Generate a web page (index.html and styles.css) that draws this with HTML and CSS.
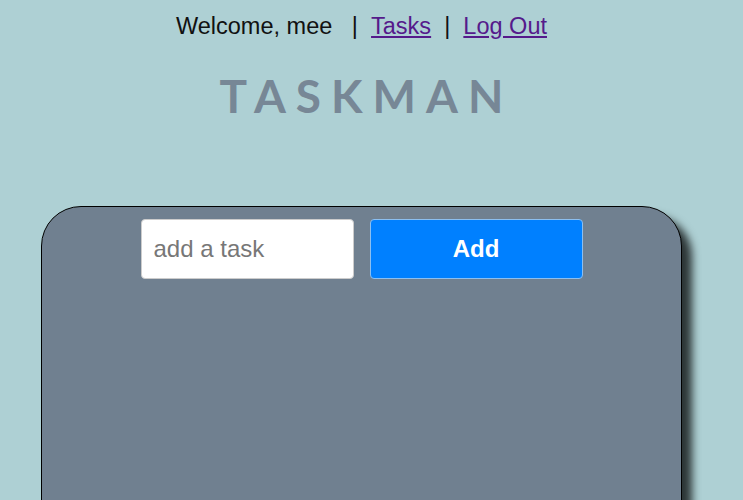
FILE: index.html
```html
<!DOCTYPE html>
<html lang="en">
<head>
    <meta charset="UTF-8">
    <meta name="viewport" content="width=device-width, initial-scale=1.0">
    <title>Taskman</title>
    <link rel="stylesheet" href="styles.css">
</head>
<body>

<div class="page">
    <div class="nav">
        Welcome, mee &nbsp; | &nbsp;<a href="#">Tasks</a> &nbsp;| &nbsp;<a href="#">Log Out</a>
    </div>
    <h1 class="title">TASKMAN</h1>

    <div class="board">
        <form class="add-form" onsubmit="return false;">
            <input type="text" placeholder="add a task" />
            <button type="submit">Add</button>
        </form>
    </div>
</div>

</body>
</html>
```

FILE: styles.css
```css
body {
    margin: 0;
    background-color: #aed0d4;
    font-family: "Liberation Sans", Arial, sans-serif;
    overflow: hidden;
}
.page {
    width: 723px;
}
.nav {
    text-align: center;
    font-size: 23.5px;
    color: #111;
    padding-top: 12px;
    line-height: 28px;
}
.nav a {
    color: #551a8b;
}
.title {
    margin: 32px 0 0 0;
    padding-left: 10px;
    text-align: center;
    font-family: Lato, "Liberation Sans", sans-serif;
    font-weight: 700;
    font-size: 46px;
    line-height: 48px;
    letter-spacing: 10px;
    color: #778796;
}
.board {
    margin: 86px 0 0 41px;
    width: 639px;
    height: 400px;
    background-color: #708090;
    border: 1px solid #000;
    border-radius: 40px;
    box-shadow: 10px 10px 8px rgba(0, 0, 0, 0.75);
}
.add-form {
    display: flex;
    justify-content: center;
    gap: 16px;
    padding-top: 12px;
}
.add-form input {
    width: 213px;
    height: 60px;
    box-sizing: border-box;
    border: 1px solid #ccc;
    border-radius: 4px;
    padding: 0 12px;
    font-size: 24px;
    font-family: "Liberation Sans", Arial, sans-serif;
}
.add-form input::placeholder {
    color: #777;
}
.add-form button {
    width: 213px;
    height: 60px;
    background-color: #0080ff;
    color: #fff;
    border: 1px solid #8cbff0;
    border-radius: 4px;
    font-size: 24px;
    font-weight: 700;
    font-family: "Liberation Sans", Arial, sans-serif;
}
```
